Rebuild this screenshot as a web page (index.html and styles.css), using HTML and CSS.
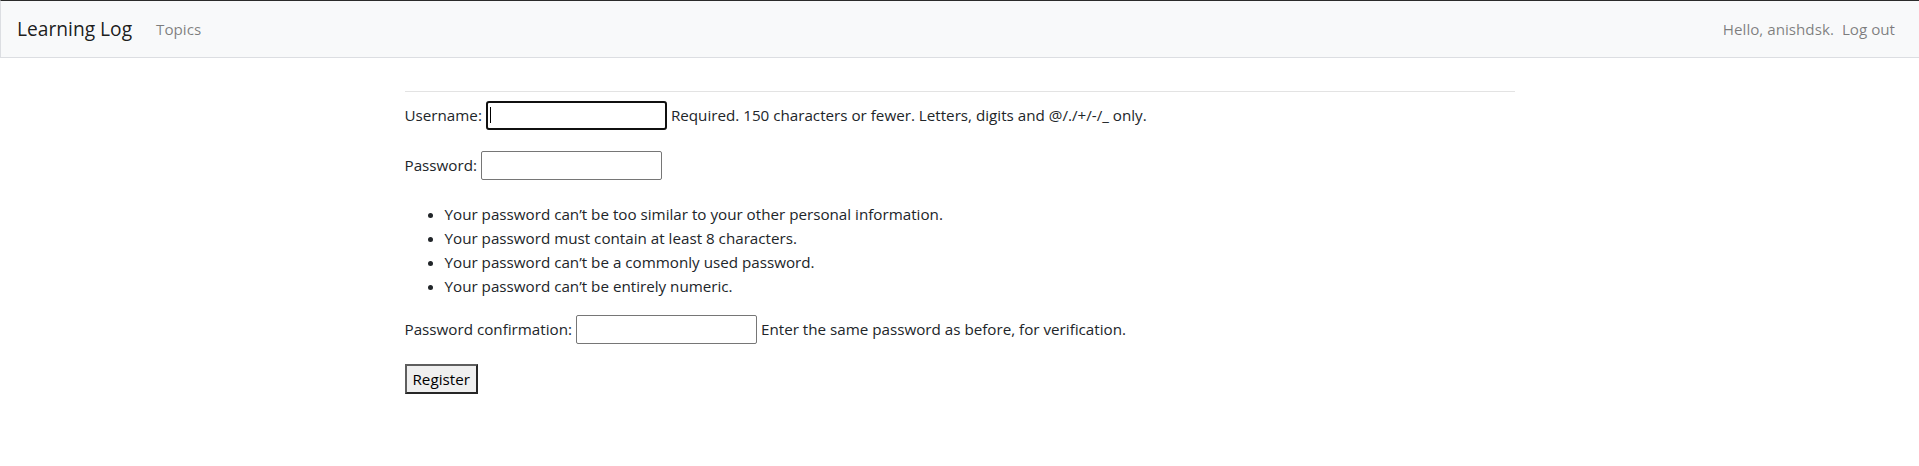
FILE: index.html
```html
<!DOCTYPE html>
<html lang="en">
<head>
<meta charset="utf-8">
<title>Learning Log</title>
<link rel="stylesheet" href="styles.css">
</head>
<body>
<nav class="navbar">
  <a class="brand" href="#">Learning Log</a>
  <ul class="nav nav-left">
    <li><a class="nav-link" href="#">Topics</a></li>
  </ul>
  <ul class="nav nav-right">
    <li><span class="navbar-text">Hello, anishdsk.</span></li>
    <li><a class="nav-link" href="#">Log out</a></li>
  </ul>
</nav>
<main class="container">
  <div class="page-header"></div>
  <form class="register">
    <p class="field">
      <label for="id_username">Username:</label>
      <input type="text" id="id_username" class="input is-focused">
      <span class="helptext">Required. 150 characters or fewer. Letters, digits and @/./+/-/_ only.</span>
    </p>
    <p class="field field-password">
      <label for="id_password1">Password:</label>
      <input type="password" id="id_password1" class="input">
    </p>
    <ul class="helplist">
      <li>Your password can’t be too similar to your other personal information.</li>
      <li>Your password must contain at least 8 characters.</li>
      <li>Your password can’t be a commonly used password.</li>
      <li>Your password can’t be entirely numeric.</li>
    </ul>
    <p class="field">
      <label for="id_password2">Password confirmation:</label>
      <input type="password" id="id_password2" class="input">
      <span class="helptext">Enter the same password as before, for verification.</span>
    </p>
    <button type="button" class="btn-register">Register</button>
  </form>
</main>
</body>
</html>
```
FILE: styles.css
```css
* { box-sizing: border-box; }

html, body { margin: 0; padding: 0; }

body {
  font-family: "Open Sans", Lato, sans-serif;
  font-size: 15.2px;
  line-height: 24px;
  color: #212529;
  background: #fff;
}

a { text-decoration: none; }

.navbar {
  display: flex;
  align-items: center;
  height: 58px;
  padding: 8px 16px;
  background: #f8f9fa;
  border-top: 1px solid #2b2b2b;
  border-left: 1px solid #dcdee2;
  border-bottom: 1px solid #dcdee2;
}

.brand {
  font-size: 19.2px;
  line-height: 30px;
  padding: 5px 0;
  margin-right: 16px;
  color: rgba(0, 0, 0, 0.9);
}

.nav {
  display: flex;
  align-items: center;
  list-style: none;
  margin: 0;
  padding: 0;
}

.nav-right { margin-left: auto; }

.nav-link {
  display: block;
  padding: 8px;
  color: rgba(0, 0, 0, 0.5);
}

.navbar-text {
  display: block;
  padding: 8px 0;
  color: rgba(0, 0, 0, 0.5);
}

.container {
  max-width: 1140px;
  margin: 0 auto;
  padding: 25px 15px 0;
}

.page-header {
  padding-bottom: 8px;
  border-bottom: 1px solid #e3e3e3;
}

.register {
  display: flex;
  flex-direction: column;
  align-items: flex-start;
  padding-top: 8px;
}

.field {
  display: flex;
  align-items: center;
  gap: 4px;
  height: 30px;
  margin: 0;
}

.field-password { margin-top: 20px; }

.input {
  width: 181px;
  height: 29px;
  padding: 1px 2px;
  font: inherit;
  border: 1px solid #767676;
  border-radius: 2px;
  background: #fff;
}

.input.is-focused {
  border: 2px solid #101010;
  border-radius: 3px;
  background-image: linear-gradient(#000, #000);
  background-repeat: no-repeat;
  background-size: 1px 16px;
  background-position: 2px 4px;
  outline: none;
}

.helplist {
  margin: 22px 0 16px;
  padding-left: 40px;
  line-height: 24px;
}

.btn-register {
  margin-top: 20px;
  height: 30px;
  padding: 1px 6px;
  font: inherit;
  color: #000;
  background: #efefef;
  border: 2px solid;
  border-color: #5e5e5e #262626 #262626 #5e5e5e;
  border-radius: 0;
}
```
